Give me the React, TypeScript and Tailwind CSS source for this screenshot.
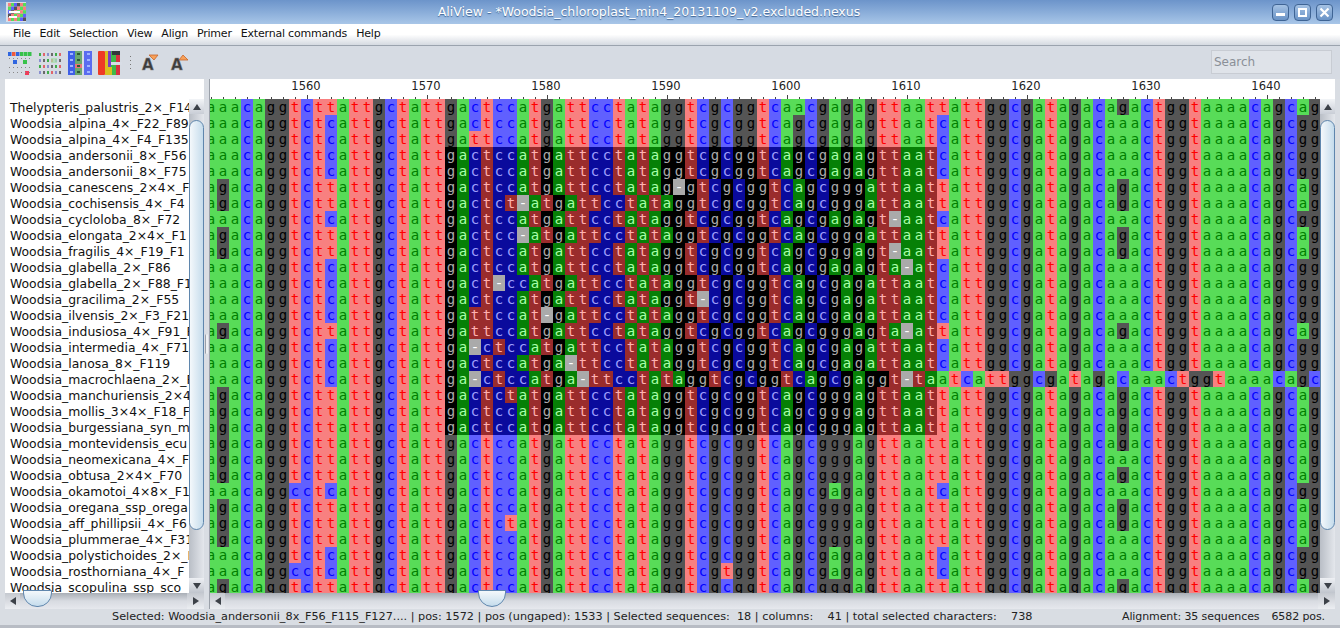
import React from 'react';

const NORMAL: Record<string, string> = {
  a: 'bg-[#58dc58] text-[#008000]',
  c: 'bg-[#6060ff] text-[#0000ff]',
  g: 'bg-[#555555] text-black',
  t: 'bg-[#f88080] text-[#ff0000]',
  '-': 'bg-[#aaaaaa] text-white',
};

const SELECTED: Record<string, string> = {
  a: 'bg-[#068006] text-[#a8ffa8]',
  c: 'bg-[#0a0a9c] text-[#a0a0ff]',
  g: 'bg-black text-[#aaaaaa]',
  t: 'bg-[#9a2c2c] text-[#ffb0b0]',
  '-': 'bg-[#aaaaaa] text-white',
};

// columns before the variable middle part
const L_T = 'aaacaggtcttattgctatt';
const L_C = 'aaacaggtctcattgctatt';
const L_G = 'agacaggtcttattgctatt';
const L_CC = 'aaacaggcctcattgctatt';

const HEAD = 'gactccatgattcctatagg';
const M_C = HEAD + 'tcgcggtcagcgagagttaatc';
const M_G = HEAD + 'tcgcggtcagcgggagttaatt';
const TAIL_A = 'tcgcggtcagcgggattaatt';
const TAIL_B = 'tcgcggtcagcgagattaatc';

const R_C = 'attggcgatagacaaactggtaaaacagcgg';
const R_G = 'attggcgatagacagactggtaaaacagcag';
const R_A = 'attggcgatagacaaactggtaaaacagcag';

const ROWS: { name: string; seq: string }[] = [
  { name: 'Thelypteris_palustris_2×_F14', seq: L_T + HEAD + 'tcgcggtcaacgagagttaatt' + R_G },
  { name: 'Woodsia_alpina_4×_F22_F89', seq: L_C + M_C + R_C },
  { name: 'Woodsia_alpina_4×_F4_F135', seq: L_C + 'gattccatgattcctatagg' + 'tcgcggtcagcgagagttaatc' + R_C },
  { name: 'Woodsia_andersonii_8×_F56', seq: L_C + M_C + R_C },
  { name: 'Woodsia_andersonii_8×_F75', seq: L_C + M_C + R_C },
  { name: 'Woodsia_canescens_2×4×_F', seq: L_G + 'gactccatgattcctatag-g' + TAIL_A + R_G },
  { name: 'Woodsia_cochisensis_4×_F4', seq: L_G + 'gactct-atgattcctatagg' + TAIL_A + R_G },
  { name: 'Woodsia_cycloloba_8×_F72', seq: L_C + HEAD + 'tcgcggtcagcgagagt-aatc' + R_C },
  { name: 'Woodsia_elongata_2×4×_F1', seq: L_G + 'gactcc-atgattcctatagg' + TAIL_A + R_G },
  { name: 'Woodsia_fragilis_4×_F19_F1', seq: L_G + HEAD + 'tcgcggtcagcgggagt-aatt' + R_G },
  { name: 'Woodsia_glabella_2×_F86', seq: L_C + HEAD + 'tcgcggtcagcgagagta-atc' + R_C },
  { name: 'Woodsia_glabella_2×_F88_F1', seq: L_C + 'gact-ccatgattcctatagg' + TAIL_B + R_C },
  { name: 'Woodsia_gracilima_2×_F55', seq: L_C + HEAD + 't-cgcggtcagcgagattaatc' + R_C },
  { name: 'Woodsia_ilvensis_2×_F3_F21', seq: L_C + 'gattccat-gattcctatagg' + TAIL_B + R_C },
  { name: 'Woodsia_indusiosa_4×_F91_F', seq: L_G + 'gattccatgattcctatagg' + 'tcgcggtcagcgggagta-att' + R_G },
  { name: 'Woodsia_intermedia_4×_F71', seq: L_C + 'ga-ctccatgattcctatagg' + TAIL_B + R_C },
  { name: 'Woodsia_lanosa_8×_F119', seq: L_C + 'gactccatga-ttcctatagg' + TAIL_B + R_C },
  { name: 'Woodsia_macrochlaena_2×_F', seq: L_C + 'ga-ctccatga-ttcctatagg' + 'tcgcggtcagcgaggt-taa' + 'tcattggcgatagacaaactggtaaaacagc' },
  { name: 'Woodsia_manchuriensis_2×4', seq: L_G + 'gactctatgattcctatagg' + 'tcgcggtcagcgggagttaatt' + R_G },
  { name: 'Woodsia_mollis_3×4×_F18_F', seq: L_G + M_G + R_G },
  { name: 'Woodsia_burgessiana_syn_m', seq: L_G + M_G + R_G },
  { name: 'Woodsia_montevidensis_ecu', seq: L_G + M_G + R_G },
  { name: 'Woodsia_neomexicana_4×_F', seq: L_G + M_G + R_A },
  { name: 'Woodsia_obtusa_2×4×_F70', seq: L_G + M_G + R_G },
  { name: 'Woodsia_okamotoi_4×8×_F1', seq: L_CC + M_C + R_C },
  { name: 'Woodsia_oregana_ssp_orega', seq: L_G + M_G + R_G },
  { name: 'Woodsia_aff_phillipsii_4×_F6', seq: L_G + 'gactctatgattcctatagg' + 'tcgcggtcagcgggagttaatt' + R_G },
  { name: 'Woodsia_plummerae_4×_F31', seq: L_G + M_G + R_A },
  { name: 'Woodsia_polystichoides_2×_F', seq: L_C + M_C + R_C },
  { name: 'Woodsia_rosthorniana_4×_F', seq: L_CC + HEAD + 'tcgtggtcagcgagagttaatc' + R_C },
  { name: 'Woodsia_scopulina_ssp_sco', seq: L_G + M_G + R_G },
];

const COLUMNS = Array.from({ length: 93 }, (_, k) => k);

function Cell({ ch, selected }: { ch: string; selected: boolean }) {
  const tone = selected ? SELECTED[ch] : NORMAL[ch];
  return <span className={`block h-4 w-3 shrink-0 text-center leading-4 ${tone}`}>{ch}</span>;
}

function AlignmentRow({ seq, index }: { seq: string; index: number }) {
  const rowSelected = index >= 3 && index <= 20;
  return (
    <div className="flex h-4">
      {seq.split('').map((ch, k) => (
        <Cell key={k} ch={ch} selected={rowSelected && k >= 20 && k <= 60} />
      ))}
    </div>
  );
}

function Ruler() {
  return (
    <div className="flex h-5 -ml-[5px] overflow-visible">
      {COLUMNS.map((k) => {
        const pos = k + 1552;
        const major = pos % 10 === 0;
        return (
          <div key={k} className="relative h-5 w-3 shrink-0">
            {major && (
              <span className="absolute left-[5px] top-0 -translate-x-1/2 text-[11.5px] leading-[14px] text-[#222222]">
                {pos}
              </span>
            )}
            <span className={`absolute bottom-0 left-[6px] w-px bg-[#444444] ${major ? 'h-[4px]' : 'h-[2px]'}`} />
          </div>
        );
      })}
    </div>
  );
}

function ArrowGlyph({ dir }: { dir: 'up' | 'down' | 'left' | 'right' }) {
  const points = {
    up: '1,8 5,2 9,8',
    down: '1,2 5,8 9,2',
    left: '8,1 2,5 8,9',
    right: '2,1 8,5 2,9',
  }[dir];
  return (
    <svg width="10" height="10" viewBox="0 0 10 10">
      <polygon points={points} fill="#3c4148" />
    </svg>
  );
}

function VScrollbar({ top, height }: { top: number; height: number }) {
  return (
    <div className="flex w-[15px] shrink-0 flex-col bg-gradient-to-r from-[#b9bec6] to-[#e4e7ec]">
      <div className="flex h-[15px] items-center justify-center bg-gradient-to-b from-[#f2f4f7] to-[#c9ced6]">
        <ArrowGlyph dir="up" />
      </div>
      <div className="min-h-0 flex-1 overflow-hidden">
        <div
          className="rounded-[14px] border border-[#5f86ad] bg-gradient-to-r from-[#f4f8fb] to-[#c5dcec]"
          style={{ marginTop: top, height }}
        />
      </div>
      <div className="flex h-[15px] items-center justify-center bg-gradient-to-b from-[#eef0f4] to-[#c0c5cd]">
        <ArrowGlyph dir="down" />
      </div>
    </div>
  );
}

function HScrollbar({ thumbLeft, thumbWidth }: { thumbLeft: number; thumbWidth: number }) {
  return (
    <div className="flex h-4 shrink-0 bg-gradient-to-b from-[#a9aeb6] via-[#d8dbe1] to-[#e6e8ed]">
      <div className="flex w-[15px] shrink-0 items-center justify-center bg-gradient-to-b from-[#c5c9d0] to-[#eceef2]">
        <ArrowGlyph dir="left" />
      </div>
      <div className="min-w-0 flex-1">
        <div
          className="-mt-[3px] h-[17px] rounded-b-[14px] border border-[#5f86ad] bg-gradient-to-b from-[#f4f8fb] to-[#c5dcec]"
          style={{ marginLeft: thumbLeft, width: thumbWidth }}
        />
      </div>
      <div className="flex w-[17px] shrink-0 items-center justify-center bg-gradient-to-b from-[#c5c9d0] to-[#eceef2]">
        <ArrowGlyph dir="right" />
      </div>
    </div>
  );
}

function WindowButton({ children }: { children: React.ReactNode }) {
  return (
    <div className="flex h-[17px] w-[17px] items-center justify-center rounded-[4px] border border-[#3f6494] bg-gradient-to-b from-[#a5c2e4] to-[#6a93c6]">
      {children}
    </div>
  );
}

function AppIcon() {
  const colors = ['#f88080', '#58dc58', '#6060ff', '#555555', '#f88080', '#58dc58'];
  return (
    <svg width="20" height="20" viewBox="0 0 20 20" className="shrink-0">
      <rect width="20" height="20" fill="#d8dde6" />
      {[0, 1, 2, 3, 4, 5].map((col) =>
        [0, 1, 2, 3, 4].map((row) => (
          <rect key={`${col}-${row}`} x={2 + col * 3} y={1 + row * 3.6} width="3" height="3.6" fill={colors[(col + row) % 6]} />
        )),
      )}
      <rect x="3" y="9" width="11" height="2" fill="#ffffff" />
      <rect x="3" y="14" width="8" height="2" fill="#ffffff" />
    </svg>
  );
}

function SeqIconOne() {
  return (
    <svg width="24" height="24" viewBox="0 0 24 24">
      {['#2f66e0', '#ef5a3c', '#2f66e0', '#36c24a', '#36c24a', '#36c24a'].map((c, i) => (
        <rect key={i} x={i * 4} y="1" width="3.5" height="4" fill={c} />
      ))}
      <rect x="5" y="9" width="4" height="4" fill="#2f66e0" />
      <rect x="15" y="9" width="4" height="4" fill="#36c24a" />
      <rect x="17" y="20" width="4" height="4" fill="#ef3c5a" />
      {[1, 5, 9, 13, 17, 21].map((x) => (
        <g key={x}>
          <rect x={x} y="7" width="1" height="1" fill="#888888" />
          <rect x={x} y="16" width="1" height="1" fill="#888888" />
          <rect x={x} y="21" width="1" height="1" fill="#888888" />
        </g>
      ))}
    </svg>
  );
}

function SeqIconTwo() {
  const tints = ['#3fae4a', '#e0656c', '#8a8fd0', '#6a6a6a'];
  return (
    <svg width="24" height="24" viewBox="0 0 24 24">
      {[0, 1, 2, 3].map((row) =>
        [0, 1, 2, 3, 4, 5].map((col) => (
          <rect
            key={`${row}-${col}`}
            x={col * 4 + 1}
            y={row * 6 + 2}
            width="2"
            height="3"
            fill={tints[(row * 2 + col) % 4]}
          />
        )),
      )}
      <rect x="13" y="7" width="6" height="5" fill="#a5e0a8" opacity="0.7" />
    </svg>
  );
}

function SeqIconThree() {
  return (
    <svg width="24" height="24" viewBox="0 0 24 24">
      <rect x="0" y="0" width="7" height="24" fill="#3f5fe6" />
      <rect x="7" y="0" width="7" height="24" fill="#6ba86f" />
      <rect x="16" y="0" width="8" height="24" fill="#5a6cf0" />
      <rect x="7" y="13" width="7" height="4" fill="#e8767a" />
      {[3, 9, 15, 21].map((y) => (
        <g key={y}>
          <rect x="2" y={y - 1} width="3" height="2" fill="#9fb4ff" />
          <rect x="9" y={y - 1} width="3" height="2" fill="#2f5a34" />
          <rect x="19" y={y - 1} width="3" height="2" fill="#9fb4ff" />
        </g>
      ))}
    </svg>
  );
}

function SeqIconFour() {
  return (
    <svg width="24" height="24" viewBox="0 0 24 24">
      <rect x="0" y="0" width="7" height="24" rx="1" fill="#ee3a26" />
      <rect x="7" y="0" width="3" height="24" fill="#d8c020" />
      <rect x="10" y="0" width="3" height="24" fill="#7a3cc8" />
      <rect x="13" y="0" width="5" height="24" fill="#3fb84a" />
      <rect x="18" y="0" width="4" height="24" fill="#d83040" />
      <rect x="13" y="11" width="11" height="3" fill="#d8dde6" />
      <rect x="14" y="0" width="8" height="4" fill="#34363c" />
      <rect x="10" y="16" width="4" height="8" fill="#d8c020" />
    </svg>
  );
}

function FontSizeIcon({ up }: { up: boolean }) {
  return (
    <svg width="19" height="20" viewBox="0 0 19 20">
      <text x="1" y="17" fontFamily="DejaVu Sans" fontWeight="700" fontSize="15" fill="#3d3d3d" stroke="#8a8a8a" strokeWidth="0.4">
        A
      </text>
      {up ? (
        <polygon points="9,7 13,2 18,7" fill="#f7a15a" stroke="#c8642a" strokeWidth="0.8" />
      ) : (
        <polygon points="8,2 17,2 13,7" fill="#f7a15a" stroke="#c8642a" strokeWidth="0.8" />
      )}
    </svg>
  );
}

export default function App() {
  return (
    <div className="flex h-[628px] w-[1340px] flex-col overflow-hidden bg-[#d9dde3] font-['DejaVu_Sans',sans-serif] text-[12px] text-[#222222]">
      {/* title bar */}
      <div className="flex h-6 shrink-0 items-center bg-gradient-to-b from-[#6c94ca] to-[#a8c6e8] pl-[6px] pr-[7px]">
        <AppIcon />
        <div className="flex-1 text-center text-[12.5px] text-white [text-shadow:0_1px_1px_#3f6494]">
          AliView - *Woodsia_chloroplast_min4_20131109_v2.excluded.nexus
        </div>
        <div className="flex gap-[5px]">
          <WindowButton>
            <span className="mt-[5px] block h-[3px] w-[9px] bg-white" />
          </WindowButton>
          <WindowButton>
            <span className="block h-[9px] w-[9px] border-2 border-white" />
          </WindowButton>
          <WindowButton>
            <svg width="11" height="11" viewBox="0 0 11 11">
              <path d="M1.5 1.5 L9.5 9.5 M9.5 1.5 L1.5 9.5" stroke="#ffffff" strokeWidth="2.2" />
            </svg>
          </WindowButton>
        </div>
      </div>

      {/* menu */}
      <div className="flex h-[22px] shrink-0 items-center gap-[9px] border-b border-[#9ba3ae] bg-gradient-to-b from-white via-white to-[#d5dae1] pl-[13px] text-[11px] tracking-[-0.2px] text-[#111111]">
        <span>File</span>
        <span>Edit</span>
        <span>Selection</span>
        <span>View</span>
        <span>Align</span>
        <span>Primer</span>
        <span>External commands</span>
        <span>Help</span>
      </div>

      {/* toolbar */}
      <div className="flex h-[33px] shrink-0 items-center bg-[#d6dbe3] pl-[8px] pr-[8px]">
        <div className="flex items-center gap-[6px]">
          <SeqIconOne />
          <SeqIconTwo />
          <SeqIconThree />
          <SeqIconFour />
        </div>
        <div className="ml-[8px] mr-[10px] flex flex-col gap-[3px]">
          <span className="block h-px w-px bg-[#777777]" />
          <span className="block h-px w-px bg-[#777777]" />
          <span className="block h-px w-px bg-[#777777]" />
          <span className="block h-px w-px bg-[#777777]" />
        </div>
        <div className="flex items-center gap-[10px]">
          <FontSizeIcon up={false} />
          <FontSizeIcon up />
        </div>
        <div className="ml-auto mb-[1px] flex h-6 w-[121px] items-center border border-[#c8ccd3] bg-[#dfe3e9] pl-[2px] text-[12px] text-[#8a8f97]">
          Search
        </div>
      </div>

      {/* main panes */}
      <div className="flex min-h-0 flex-1 pl-[5px] pr-[5px]">
        {/* sequence names */}
        <div className="flex w-[199px] shrink-0 flex-col">
          <div className="flex min-h-0 flex-1 flex-col bg-white">
            <div className="h-5 shrink-0" />
            <div className="flex min-h-0 flex-1">
              <div className="min-w-0 flex-1 overflow-hidden pt-px">
                {ROWS.map((row) => (
                  <div key={row.name} className="h-4 whitespace-nowrap pl-[5px] text-[12.4px] leading-4 text-[#111111]">
                    {row.name}
                  </div>
                ))}
              </div>
              <VScrollbar top={6} height={410} />
            </div>
          </div>
          <HScrollbar thumbLeft={3} thumbWidth={29} />
        </div>

        {/* splitter */}
        <div className="flex w-[6px] shrink-0 items-center justify-between border-r border-[#9aa0a9] bg-[#d9dde3]">
          <span className="ml-px block h-[20px] w-[3px] rounded-sm border-l border-[#9aa0a9] bg-[#eef0f3]" />
        </div>

        {/* alignment */}
        <div className="flex min-w-0 flex-1 flex-col">
          <div className="min-h-0 flex-1 overflow-hidden bg-white">
            <Ruler />
            <div className="flex h-[494px]">
              <div className="min-w-0 flex-1 overflow-hidden">
                <div className="-ml-[5px] w-[1116px] font-['DejaVu_Sans_Mono',monospace] text-[14px]">
                  {ROWS.map((row, index) => (
                    <AlignmentRow key={row.name} seq={row.seq} index={index} />
                  ))}
                </div>
              </div>
              <VScrollbar top={6} height={410} />
            </div>
          </div>
          <HScrollbar thumbLeft={253} thumbWidth={28} />
        </div>
      </div>

      {/* status bar */}
      <div className="flex h-[16px] shrink-0 items-center whitespace-pre pl-[112px] pr-[15px] text-[11.25px] text-[#222222]">
        <span>
          Selected: Woodsia_andersonii_8x_F56_F115_F127.... | pos: 1572 | pos (ungaped): 1533 | Selected sequences:  18 | columns:    41 | total selected characters:    738
        </span>
        <span className="ml-auto flex gap-[12px] text-[11px] tracking-[-0.1px]">
          <span>Alignment: 35 sequences</span>
          <span>6582 pos.</span>
        </span>
      </div>
      <div className="h-[3px] shrink-0 bg-[#b8bcc4]" />
    </div>
  );
}
